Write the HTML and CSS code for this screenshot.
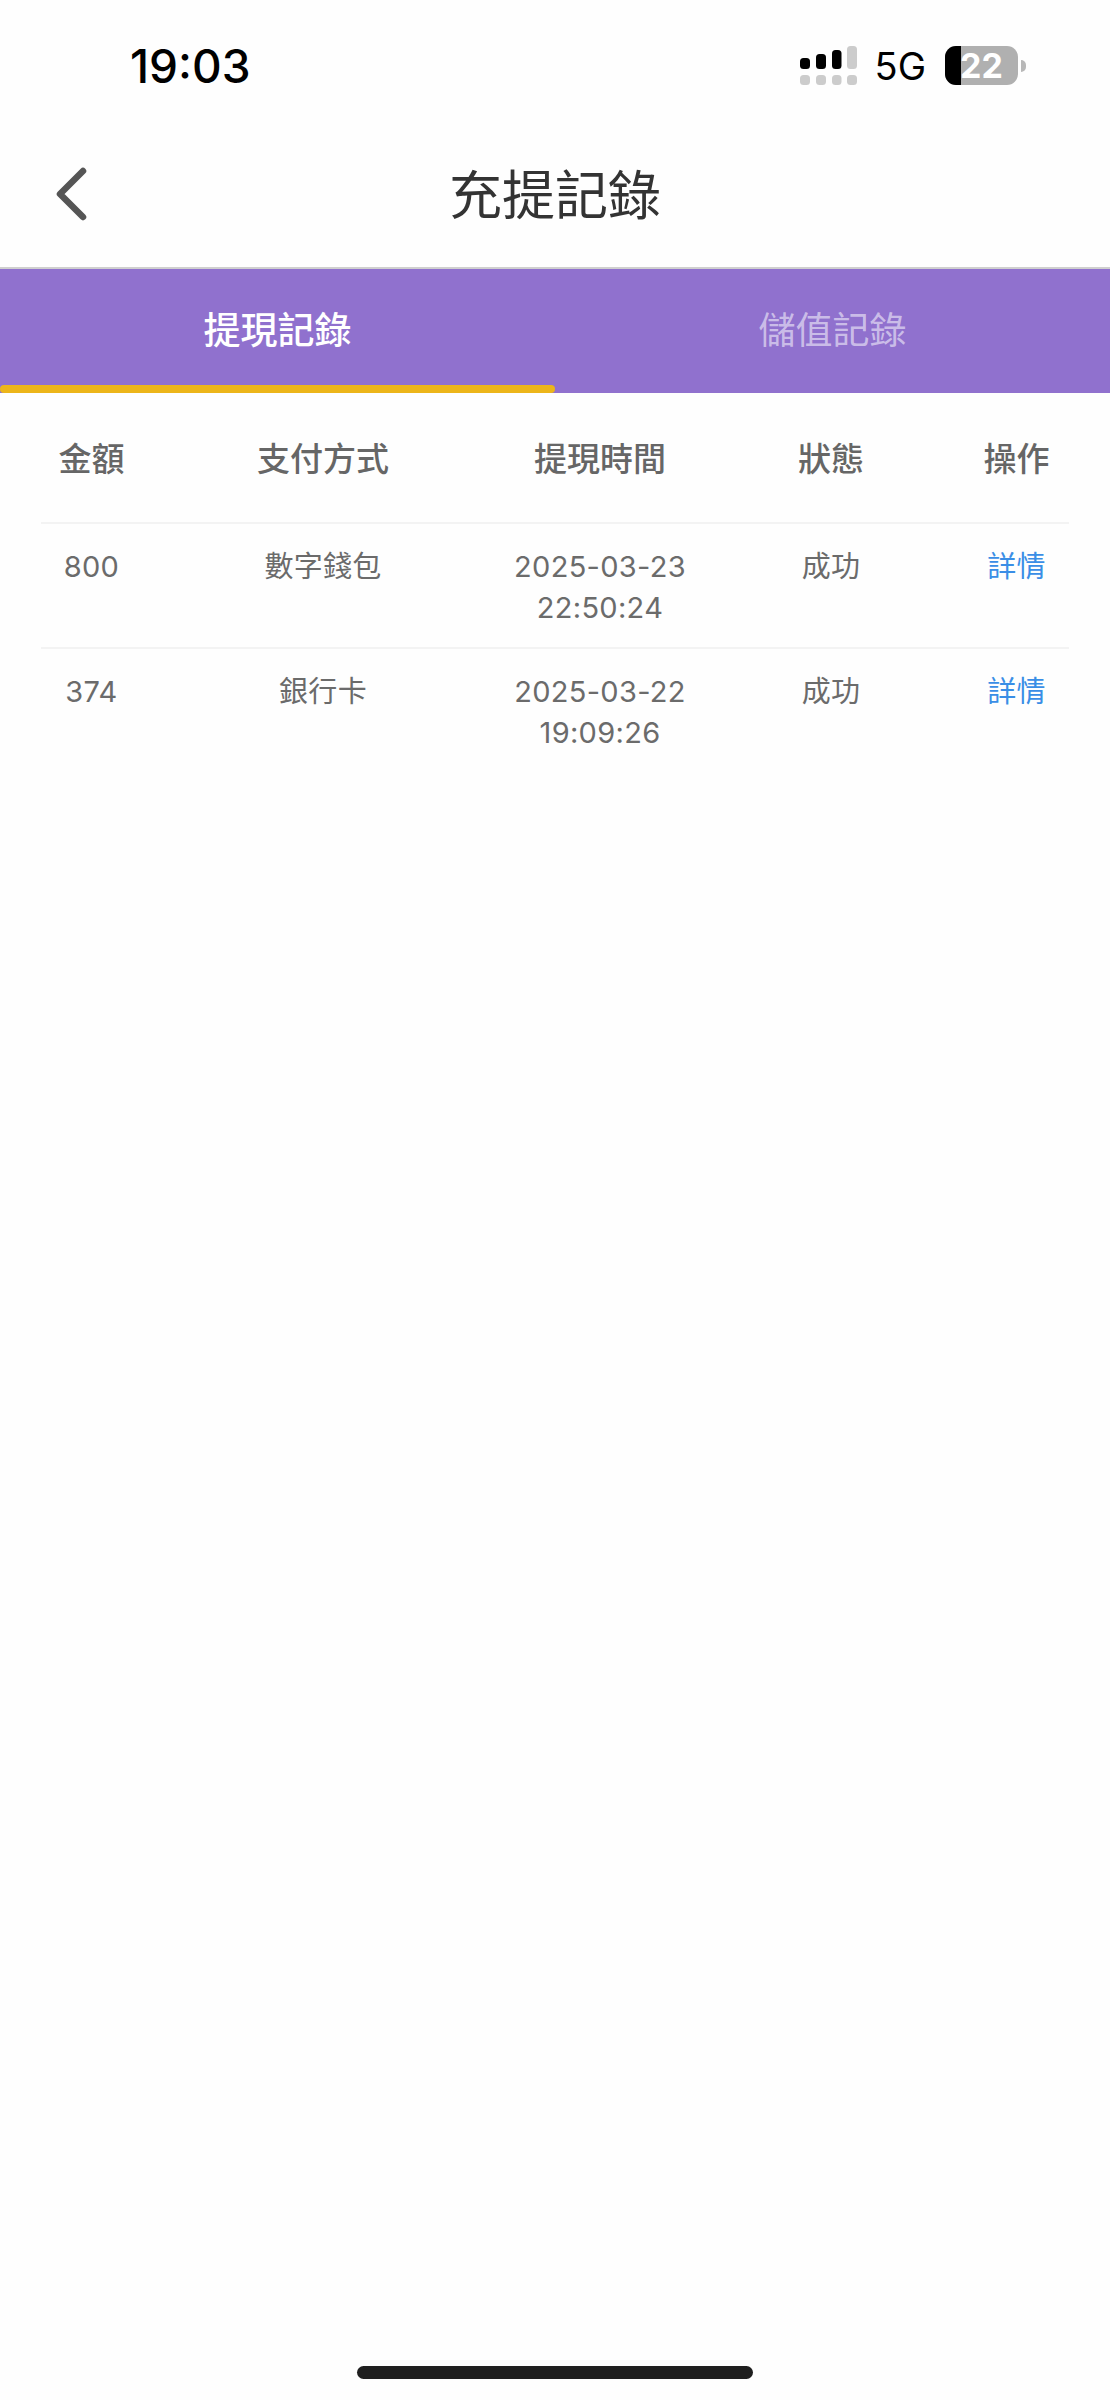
FILE: index.html
```html
<!DOCTYPE html>
<html lang="zh-Hant">
<head>
    <meta charset="UTF-8" />
    <meta name="viewport" content="width=device-width, initial-scale=1.0" />
    <title>充提記錄</title>
    <link rel="stylesheet" href="styles.css">
</head>
<body>
    <div class="status-bar">
        <div class="status-time">19:03</div>
        <div class="status-icons">
            <svg class="signal" width="58" height="40" viewBox="0 0 58 40">
                <rect x="0" y="12" width="10" height="11" rx="3.5" fill="#000"/>
                <rect x="16" y="8" width="10" height="15" rx="3.5" fill="#000"/>
                <rect x="32" y="4" width="9.5" height="19" rx="3.5" fill="#000"/>
                <rect x="47" y="0" width="10" height="23" rx="3.5" fill="#ccc"/>
                <rect x="0" y="29" width="10" height="10" rx="3.5" fill="#ccc"/>
                <rect x="16" y="29" width="10" height="10" rx="3.5" fill="#ccc"/>
                <rect x="32" y="29" width="9.5" height="10" rx="3.5" fill="#ccc"/>
                <rect x="47" y="29" width="10" height="10" rx="3.5" fill="#ccc"/>
            </svg>
            <span class="network">5G</span>
            <div class="battery">
                <div class="battery-body">
                    <div class="battery-level"></div>
                    <span class="battery-text">22</span>
                </div>
                <div class="battery-nub"></div>
            </div>
        </div>
    </div>

    <div class="nav">
        <svg class="back" width="36" height="60" viewBox="0 0 36 60">
            <path d="M31 8 L8 31 L31 54" fill="none" stroke="#555" stroke-width="6.5" stroke-linecap="round" stroke-linejoin="round"/>
        </svg>
        <h1>充提記錄</h1>
    </div>

    <div class="tabs">
        <div class="tab active">提現記錄</div>
        <div class="tab">儲值記錄</div>
    </div>

    <div class="records">
        <div class="row head">
            <div>金額</div>
            <div>支付方式</div>
            <div>提現時間</div>
            <div>狀態</div>
            <div>操作</div>
        </div>
        <div class="row">
            <div>800</div>
            <div>數字錢包</div>
            <div>2025-03-23<br>22:50:24</div>
            <div>成功</div>
            <div class="link">詳情</div>
        </div>
        <div class="row">
            <div>374</div>
            <div>銀行卡</div>
            <div>2025-03-22<br>19:09:26</div>
            <div>成功</div>
            <div class="link">詳情</div>
        </div>
    </div>

    <div class="spacer"></div>
    <div class="home-indicator"></div>
</body>
</html>
```

FILE: styles.css
```css
* {
    margin: 0;
    padding: 0;
    box-sizing: border-box;
}

body {
    font-family: Inter, "Noto Sans CJK TC", sans-serif;
    background-color: #fefefe;
    color: #666;
    min-height: 100vh;
    display: flex;
    flex-direction: column;
}

.status-bar {
    height: 100px;
    display: flex;
    justify-content: space-between;
    padding: 46px 84px 0 130px;
}

.status-time {
    font-size: 46px;
    font-weight: 550;
    line-height: 40px;
    color: #000;
}

.status-icons {
    display: flex;
    align-items: flex-start;
    gap: 19px;
}

.network {
    font-size: 38px;
    font-weight: 400;
    line-height: 40px;
    color: #000;
    margin-left: -2px;
}

.battery {
    display: flex;
    align-items: center;
    gap: 3px;
    height: 39px;
}

.battery-body {
    position: relative;
    width: 73px;
    height: 39px;
    border-radius: 11px;
    background: #b0b0b0;
    overflow: hidden;
}

.battery-level {
    width: 16px;
    height: 100%;
    background: #000;
}

.battery-text {
    position: absolute;
    left: 15px;
    top: 0;
    font-size: 34px;
    font-weight: 700;
    line-height: 39px;
    color: #fff;
}

.battery-nub {
    width: 5px;
    height: 12px;
    background: #b8b8b8;
    border-radius: 0 6px 6px 0;
}

.nav {
    height: 169px;
    border-bottom: 2px solid #cfcfcf;
    display: flex;
    align-items: center;
    justify-content: center;
    position: relative;
}

.nav h1 {
    font-size: 53px;
    font-weight: 400;
    color: #333;
    margin-top: 16px;
}

.back {
    position: absolute;
    left: 52px;
    top: 63px;
}

.tabs {
    display: flex;
    height: 124px;
    background: #9071ce;
}

.tab {
    flex: 1;
    text-align: center;
    padding-top: 37px;
    font-size: 37px;
    line-height: 50px;
    color: rgba(255,255,255,0.55);
}

.tab.active {
    color: #fff;
    font-weight: 500;
    position: relative;
}

.tab.active::after {
    content: '';
    position: absolute;
    left: 0;
    right: 0;
    bottom: 0;
    height: 8px;
    background: #ecb51a;
    border-radius: 4px;
}

.records {
    margin: 0 41px;
}

.row {
    display: grid;
    grid-template-columns: 101px 362px 192px 270px 103px;
    text-align: center;
    height: 125px;
    padding-top: 22px;
    border-top: 2px solid #f3f3f3;
    font-size: 29px;
    line-height: 41px;
    letter-spacing: 0.3px;
    color: #6b6b6b;
}

.row.head {
    height: 129px;
    padding-top: 44px;
    border-top: none;
    font-size: 33px;
    font-weight: 500;
    line-height: 44px;
    letter-spacing: 0;
    color: #666;
}

.row div:last-child {
    margin-right: 2px;
}

.link {
    color: #3a8ee6;
}

.spacer {
    flex: 1;
}

.home-indicator {
    width: 396px;
    height: 13px;
    margin: 0 auto 21px;
    background: #1f1f1f;
    border-radius: 7px;
}
```
